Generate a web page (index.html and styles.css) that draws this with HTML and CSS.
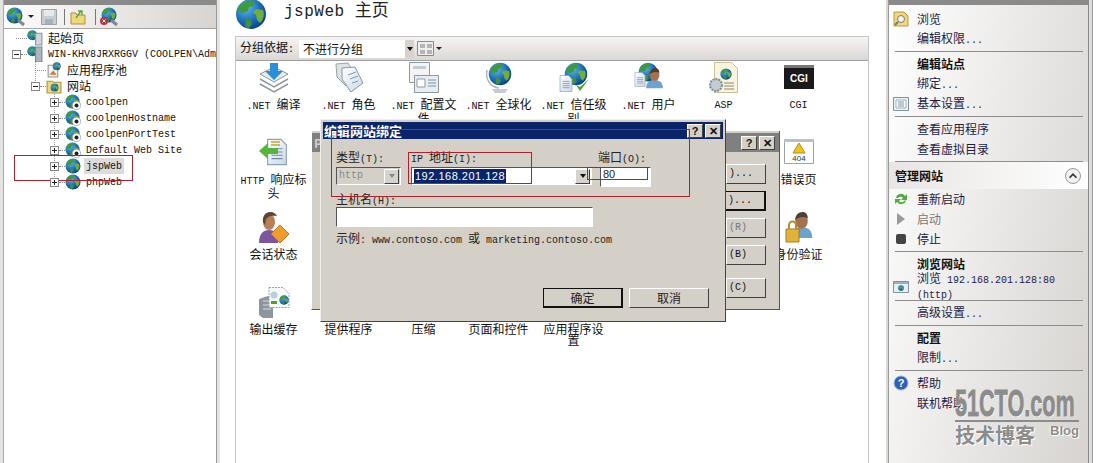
FILE: index.html
```html
<!DOCTYPE html>
<html lang="en">
<head>
  <meta charset="UTF-8" />
  <title>jspWeb 主页</title>
  <link rel="stylesheet" href="styles.css">
</head>
<body>

<svg class="defs" width="0" height="0">
  <defs>
    <radialGradient id="sea" cx="35%" cy="30%" r="80%">
      <stop offset="0" stop-color="#5fb6ea"/>
      <stop offset="0.6" stop-color="#1668b4"/>
      <stop offset="1" stop-color="#0c3a78"/>
    </radialGradient>
    <linearGradient id="paper" x1="0" y1="0" x2="1" y2="1">
      <stop offset="0" stop-color="#ffffff"/>
      <stop offset="1" stop-color="#c9d8e6"/>
    </linearGradient>
    <symbol id="globe" viewBox="0 0 32 32">
      <circle cx="16" cy="16" r="15" fill="url(#sea)"/>
      <path d="M9 4c4-2 8-2 11 0l-2 4-4 1-1 4-5 2-5-2c0-4 2-7 6-9z" fill="#3f9a3c"/>
      <path d="M21 11l7 1c2 5 0 10-3 13l-3-3-1-5-3-3z" fill="#6fae3a"/>
      <path d="M11 20l5 2 1 4-3 4c-2 0-3-1-4-2z" fill="#3f8f3c"/>
    </symbol>
    <symbol id="site" viewBox="0 0 16 16">
      <use href="#globe" width="15" height="15"/>
      <circle cx="11.500" cy="11.500" r="4.200" fill="#fff" stroke="#999" stroke-width=".7"/>
      <circle cx="11.500" cy="11.500" r="2" fill="#222"/>
    </symbol>
    <symbol id="doc" viewBox="0 0 20 24">
      <path d="M1.500.5h12l5 5v18h-17z" fill="url(#paper)" stroke="#8ea2b3"/>
      <path d="M5 9h10M5 12h10M5 15h10M5 18h10" stroke="#6f8aa3"/>
    </symbol>
    <symbol id="person" viewBox="0 0 30 30">
      <path d="M3 29c0-9 5-12 12-12s12 3 12 12z" fill="#6ea3cf"/>
      <ellipse cx="15" cy="10" rx="7" ry="8.500" fill="#a8714d"/>
      <path d="M8 9c0-6 4-9 8-9s6 3 6 7c-4-2-9-2-14 2z" fill="#4b4038"/>
    </symbol>
  </defs>
</svg>

<div class="page">

  <aside class="left">
    <div class="edge"></div>
    <div class="left-tools">
      <svg class="i20" viewBox="0 0 20 20"><use href="#globe" width="17" height="17"/><path d="M12 13l6 5" stroke="#7a8a99" stroke-width="3"/></svg>
      <span class="caret"></span>
      <svg class="i16 save" viewBox="0 0 16 16"><path d="M.5.5h15v15H.5z" fill="#c7cdd2" stroke="#9aa3aa"/><path d="M3 1h10v6H3z" fill="#e6e9eb"/><path d="M4 10h8v5H4z" fill="#aab2b8"/></svg>
      <span class="tool-sep"></span>
      <svg class="i16 open" viewBox="0 0 16 16"><path d="M1 4h5l1 2h8v9H1z" fill="#eed77c" stroke="#a8923f"/><path d="M6 9l5-7M8 2h4v4" stroke="#5aa63a" stroke-width="1.400" fill="none"/></svg>
      <span class="tool-sep wide"></span>
      <svg class="i20" viewBox="0 0 20 20"><use href="#globe" width="16" height="16" x="2"/><circle cx="5" cy="14" r="4" fill="#b8323a"/><path d="M3.500 12.500l3 3m0-3l-3 3" stroke="#fff"/><path d="M12 13l6 5" stroke="#7a8a99" stroke-width="3"/></svg>
    </div>
    <div class="tree">
      <div class="node"><span class="exp none"></span><span class="dots"></span>
        <svg class="i15" viewBox="0 0 15 15"><use href="#globe" width="10" height="10"/><path d="M8 3h6v11H8z" fill="#cfd6dc" stroke="#8a949c"/></svg><span class="cjk">起始页</span></div>
      <div class="node"><span class="exp minus"></span><span class="dots"></span>
        <svg class="i15" viewBox="0 0 15 15"><use href="#globe" width="10" height="10"/><path d="M8 1h6v14H8z" fill="#aeb6bc" stroke="#7b848b"/></svg><span class="host">WIN-KHV8JRXRGGV (COOLPEN\Adm</span></div>
      <div class="node lv1 g1"><span class="exp none"></span><span class="dots"></span>
        <svg class="i15" viewBox="0 0 15 15"><path d="M2 3h9v11H2z" fill="#f2f2f2" stroke="#8a949c"/><use href="#globe" x="6" width="8" height="8"/><path d="M3 12l4-4 3 4z" fill="#d07b2c"/></svg><span class="cjk">应用程序池</span></div>
      <div class="node lv1 g1 half"><span class="exp minus"></span><span class="dots"></span>
        <svg class="i15" viewBox="0 0 15 15"><path d="M1 3h5l1 1h7v10H1z" fill="#eed77c" stroke="#a8923f"/><use href="#globe" x="4" y="5" width="8" height="8"/></svg><span class="cjk">网站</span></div>
      <div class="node lv2 g2"><span class="exp plus"></span><span class="dots"></span><svg class="i15"><use href="#site" width="16" height="16"/></svg><span class="mono">coolpen</span></div>
      <div class="node lv2 g2"><span class="exp plus"></span><span class="dots"></span><svg class="i15"><use href="#site" width="16" height="16"/></svg><span class="mono">coolpenHostname</span></div>
      <div class="node lv2 g2"><span class="exp plus"></span><span class="dots"></span><svg class="i15"><use href="#site" width="16" height="16"/></svg><span class="mono">coolpenPortTest</span></div>
      <div class="node lv2 g2"><span class="exp plus"></span><span class="dots"></span><svg class="i15"><use href="#site" width="16" height="16"/></svg><span class="mono">Default Web Site</span></div>
      <div class="node lv2 g2"><span class="exp plus"></span><span class="dots"></span><svg class="i15"><use href="#globe" width="16" height="16"/></svg><span class="mono picked">jspWeb</span></div>
      <div class="node lv2 g2 half"><span class="exp plus"></span><span class="dots"></span><svg class="i15"><use href="#globe" width="16" height="16"/></svg><span class="mono">phpWeb</span></div>
    </div>
  </aside>

  <main class="center">
    <div class="title">
      <svg class="title-globe"><use href="#globe" width="32" height="32"/></svg>
      <h1><span class="title-en">jspWeb </span>主页</h1>
    </div>
    <div class="panel">
      <div class="group-bar">
        <span class="cjk">分组依据<span class="en">:</span></span>
        <div class="group-select"><span class="cjk">不进行分组</span><span class="drop"></span></div>
        <svg class="view-icon" viewBox="0 0 17 15"><path d="M.5.5h16v14H.5z" fill="#eee" stroke="#8a8a8a"/><path d="M3 3h5v4H3zM10 3h5v4h-5zM3 9h5v4H3zM10 9h5v4h-5z" fill="#b5b5b5"/></svg>
        <span class="caret"></span>
      </div>

      <div class="features">
        <div class="feature">
          <svg class="big" viewBox="0 0 32 32"><path d="M16 20l14-8-14-7L2 12z" fill="#e9edf0" stroke="#8b969e"/><path d="M2 17l14 8 14-8M2 22l14 8 14-8" fill="none" stroke="#8b969e" stroke-width="1.500"/><path d="M12 1h8v8h5l-9 9-9-9h5z" fill="#2a8fd6"/></svg>
          <span class="label"><span class="en">.NET </span>编译</span>
        </div>
        <div class="feature">
          <svg class="big" viewBox="0 0 32 32"><path d="M3 2l12-1 8 12-10 11-9-9z" fill="#dfe3e6" stroke="#9aa4ab"/><path d="M9 6l13-1 8 16-12 9-9-13z" fill="url(#paper)" stroke="#8398a8"/><path d="M15 13l8-3M17 17l8-3M19 21l6-2" stroke="#7f97aa"/></svg>
          <span class="label"><span class="en">.NET </span>角色</span>
        </div>
        <div class="feature">
          <svg class="big" viewBox="0 0 32 32"><path d="M1.500.5h20v20h-20z" fill="#f4f4f4" stroke="#8d9aa5"/><path d="M5 4h13v3H5z" fill="#c3ccd3"/><path d="M6.500 13.500h24v17h-24z" fill="#e7edf2" stroke="#8d9aa5"/><path d="M9 17h8v8H9z" fill="#fff" stroke="#8d9aa5"/><path d="M20 18h8M20 21h8M20 24h8" stroke="#7d92a3"/></svg>
          <span class="label"><span class="en">.NET </span>配置文<br>件</span>
        </div>
        <div class="feature">
          <svg class="big" viewBox="0 0 32 32"><use href="#globe" x="5" width="24" height="24"/><path d="M9 27h16l-3 4H12z" fill="#c5ccd1"/><path d="M4 8c-2 9 3 17 12 18" fill="none" stroke="#aeb6bb" stroke-width="1.500"/></svg>
          <span class="label"><span class="en">.NET </span>全球化</span>
        </div>
        <div class="feature">
          <svg class="big" viewBox="0 0 32 32"><use href="#globe" x="6" width="24" height="24"/><use href="#doc" x="1" y="13" width="14" height="17"/><path d="M18 23l4 6 9-12-9 8z" fill="#4aa52f"/></svg>
          <span class="label"><span class="en">.NET </span>信任级<br>别</span>
        </div>
        <div class="feature">
          <svg class="big" viewBox="0 0 32 32"><use href="#globe" x="5" width="20" height="20"/><use href="#person" x="11" y="3" width="21" height="27"/><use href="#doc" x="1" y="10" width="12" height="15"/></svg>
          <span class="label"><span class="en">.NET </span>用户</span>
        </div>
        <div class="feature">
          <svg class="big" viewBox="0 0 32 32"><path d="M6.500.5h17l6 6v24h-23z" fill="#fbf3dc" stroke="#cdbf97"/><use href="#globe" x="12" y="6" width="12" height="12"/><circle cx="8" cy="23" r="6" fill="#c3ccd3" stroke="#7d8c99" stroke-width="2" stroke-dasharray="2 1"/><path d="M16 21h10M16 24h10M16 27h10" stroke="#8a8a70"/></svg>
          <span class="label en">ASP</span>
        </div>
        <div class="feature">
          <svg class="big" viewBox="0 0 32 32"><path d="M1 3h30v24H1z" fill="#1a1a1a"/><path d="M1 3h30v3H1z" fill="#777"/><text class="cgi-text" x="16" y="20" text-anchor="middle">CGI</text></svg>
          <span class="label en">CGI</span>
        </div>

        <div class="feature">
          <svg class="big" viewBox="0 0 32 32"><use href="#doc" x="8" width="22" height="30"/><path d="M13 5h9M13 8h9" stroke="#c8a53a" stroke-width="1.500"/><path d="M1 14l9-8v5h10v6H10v5z" fill="#57b43d"/></svg>
          <span class="label"><span class="en">HTTP </span>响应标<br>头</span>
        </div>
        <div class="feature"></div><div class="feature"></div><div class="feature"></div>
        <div class="feature"></div><div class="feature"></div><div class="feature"></div>
        <div class="feature">
          <svg class="big" viewBox="0 0 32 32"><path d="M1.500 2.500h29v24h-29z" fill="#fff" stroke="#9aa4ab"/><path d="M1 2h30v3H1z" fill="#b9c0c5"/><path d="M16 6l6 10H10z" fill="#f2c21c" stroke="#b58f10"/><text class="code-text" x="16" y="24" text-anchor="middle">404</text></svg>
          <span class="label">错误页</span>
        </div>

        <div class="feature">
          <svg class="big" viewBox="0 0 32 32"><path d="M1 31c0-9 4-13 10-13s9 3 9 13z" fill="#7b559e"/><ellipse cx="11" cy="10" rx="6" ry="8" fill="#b67f58"/><path d="M5 10c-1-6 3-10 7-10s6 2 7 4c-5-1-9 0-11 3l-1 6z" fill="#5f4430"/><path d="M22 13l9 9-9 9-9-9z" fill="#ef9c2e" stroke="#c87512"/></svg>
          <span class="label">会话状态</span>
        </div>
        <div class="feature"></div><div class="feature"></div><div class="feature"></div>
        <div class="feature"></div><div class="feature"></div><div class="feature"></div>
        <div class="feature">
          <svg class="big" viewBox="0 0 32 32"><use href="#person" x="5" width="27" height="27"/><path d="M3 17h13v13H3z" fill="#e3b23c" stroke="#a67f1d"/><path d="M6 17v-4a3.500 3.500 0 0 1 7 0v4" fill="none" stroke="#b98f2c" stroke-width="2"/></svg>
          <span class="label">身份验证</span>
        </div>

        <div class="feature">
          <svg class="big" viewBox="0 0 32 32"><path d="M1 12l9-3 5 3v19H5l-4-3z" fill="#8d969d"/><path d="M5 14h8M5 18h8M5 22h8" stroke="#d6dbde"/><path d="M11 .5h14l6 6v14H11z" fill="#f6f8f9" stroke="#9aa4ab" stroke-dasharray="2 1"/><circle cx="16" cy="8" r="3.500" fill="#b9cfe0"/><use href="#globe" x="21" y="8" width="10" height="10"/><path d="M13 14h6v3h-6z" fill="#4aa52f"/></svg>
          <span class="label">输出缓存</span>
        </div>
        <div class="feature"><span class="big-gap"></span><span class="label">提供程序</span></div>
        <div class="feature"><span class="big-gap"></span><span class="label">压缩</span></div>
        <div class="feature"><span class="big-gap"></span><span class="label">页面和控件</span></div>
        <div class="feature"><span class="big-gap"></span><span class="label">应用程序设<br>置</span></div>
      </div>
    </div>
  </main>

  <aside class="right">
    <div class="right-edge"></div>
    <div class="act"><span class="act-icon"><svg class="i16" viewBox="0 0 16 16"><path d="M1 1h10l4 4v10H1z" fill="#eed77c" stroke="#b39a45"/><circle cx="8" cy="8" r="3.500" fill="#f5f5f0" stroke="#777"/><path d="M5 11l-3 3" stroke="#777" stroke-width="2"/></svg></span><span>浏览</span></div>
    <div class="act"><span class="act-icon"></span><span>编辑权限<span class="en">...</span></span></div>
    <div class="sep"></div>
    <div class="act strong"><span class="act-icon"></span><span>编辑站点</span></div>
    <div class="act"><span class="act-icon"></span><span>绑定<span class="en">...</span></span></div>
    <div class="act"><span class="act-icon"><svg class="i16" viewBox="0 0 16 16"><path d="M.5 1.500h15v13H.5z" fill="#eef3f6" stroke="#7d92a3"/><path d="M3 4h10v8H3z" fill="#fff" stroke="#9fb0bd"/><path d="M5 6h6M5 8h6M5 10h6" stroke="#7d92a3"/></svg></span><span>基本设置<span class="en">...</span></span></div>
    <div class="sep"></div>
    <div class="act"><span class="act-icon"></span><span>查看应用程序</span></div>
    <div class="act"><span class="act-icon"></span><span>查看虚拟目录</span></div>
    <div class="sep flush"></div>
    <div class="right-head"><span>管理网站</span><span class="collapse"><svg viewBox="0 0 16 16"><path d="M4 10l4-4 4 4" fill="none" stroke="#333" stroke-width="2"/></svg></span></div>
    <div class="act"><span class="act-icon"><svg class="i16" viewBox="0 0 16 16"><path d="M3 7a5 5 0 0 1 9-2l2-2v6H8l2-2a3 3 0 0 0-5 0zM13 9a5 5 0 0 1-9 2l-2 2V8h6l-2 2a3 3 0 0 0 5 0z" fill="#4fae3f"/></svg></span><span>重新启动</span></div>
    <div class="act off"><span class="act-icon"><svg class="i16" viewBox="0 0 16 16"><path d="M4 2l8 6-8 6z" fill="#9a9a9a"/></svg></span><span>启动</span></div>
    <div class="act"><span class="act-icon"><svg class="i16" viewBox="0 0 16 16"><rect x="3" y="3" width="10" height="10" rx="2" fill="#444"/></svg></span><span>停止</span></div>
    <div class="sep"></div>
    <div class="act strong"><span class="act-icon"></span><span>浏览网站</span></div>
    <div class="act browse"><span class="act-icon"><svg class="i16" viewBox="0 0 16 16"><path d="M.5 2.500h15v11H.5z" fill="#e8eef2" stroke="#7d92a3"/><path d="M1 3h14v2H1z" fill="#9fb0bd"/><use href="#globe" x="5" y="6" width="6" height="6"/></svg></span><span class="browse-text">浏览<span class="en"> 192.168.201.128:80</span><br><span class="en">(http)</span></span></div>
    <div class="sep"></div>
    <div class="act"><span class="act-icon"></span><span>高级设置<span class="en">...</span></span></div>
    <div class="sep"></div>
    <div class="act strong"><span class="act-icon"></span><span>配置</span></div>
    <div class="act"><span class="act-icon"></span><span>限制<span class="en">...</span></span></div>
    <div class="sep"></div>
    <div class="act"><span class="act-icon"><svg class="i16" viewBox="0 0 16 16"><circle cx="8" cy="8" r="7" fill="#2f5fb3" stroke="#9fb2d8"/><text class="help-text" x="8" y="12" text-anchor="middle">?</text></svg></span><span>帮助</span></div>
    <div class="act"><span class="act-icon"></span><span>联机帮助</span></div>
  </aside>
</div>

<!-- dialog behind, only its edge shows -->
<div class="back-dialog">
  <div class="back-title"><span class="back-title-text">P</span><span class="cap-btn">?</span><span class="cap-btn">✕</span></div>
  <div class="back-buttons">
    <span class="btn-mini">)...</span>
    <span class="btn-mini def">)...</span>
    <span class="btn-mini off">(R)</span>
    <span class="btn-mini">(B)</span>
    <span class="btn-mini low">(C)</span>
  </div>
</div>

<div class="dialog">
  <div class="dialog-title"><span>编辑网站绑定</span><span class="cap-btn">?</span><span class="cap-btn">✕</span></div>
  <div class="dialog-body">
    <div class="binding-row">
      <div class="col-type">
        <label>类型<span class="en">(T):</span></label>
        <div class="field disabled"><span class="en">http</span><span class="drop"></span></div>
      </div>
      <div class="col-ip">
        <label><span class="en">IP </span>地址<span class="en">(I):</span></label>
        <div class="field"><span class="ip-value">192.168.201.128</span><span class="drop"></span></div>
      </div>
      <div class="col-port">
        <label>端口<span class="en">(O):</span></label>
        <div class="field tall"><span class="port-value">80</span></div>
      </div>
    </div>
    <label class="host-label">主机名<span class="en">(H):</span></label>
    <div class="field host-input"></div>
    <div class="example">示例<span class="en">: www.contoso.com </span>或<span class="en"> marketing.contoso.com</span></div>
    <div class="dialog-buttons">
      <button class="btn def">确定</button>
      <button class="btn">取消</button>
    </div>
  </div>
</div>

<!-- red marks drawn on the screenshot -->
<div class="mark mark-site"></div>
<div class="mark mark-all"></div>
<div class="mark mark-ip"></div>
<div class="mark mark-port"></div>

<div class="watermark">
  <div class="wm-logo">51CTO.com</div>
  <div class="wm-line"></div>
  <div class="wm-sub"><span class="wm-blog-cn">技术博客</span><span class="wm-blog">Blog</span></div>
</div>

</body>
</html>
```

FILE: styles.css
```css
* {
  box-sizing: border-box;
}

html, body {
  margin: 0;
  height: 463px;
  overflow: hidden;
}

body {
  background: #fff;
  color: #111;
  font-family: "Noto Sans CJK SC", "Liberation Mono", monospace;
  font-size: 12px;
  line-height: 14px;
}

.defs {
  position: absolute;
}

.en, .mono, .host {
  font-family: "Liberation Mono", "Noto Sans CJK SC", monospace;
  font-size: 10px;
  white-space: pre;
}

svg {
  display: block;
  flex: none;
}

.i20 { width: 20px; height: 20px; }
.i16 { width: 16px; height: 16px; }
.i15 { width: 16px; height: 16px; }

.page {
  display: flex;
  height: 463px;
}

/* left tree */
.left {
  width: 214px;
  flex: none;
  margin: 0 3px;
  border-left: 1px solid #aaa;
  border-right: 1px solid #999;
  box-shadow: 3px 0 0 #e6e4e2, -3px 0 0 #e6e4e2;
}

.edge {
  height: 5px;
  background: #8a8a8a;
}

.left-tools {
  height: 24px;
  display: flex;
  align-items: center;
  padding-left: 2px;
  background: linear-gradient(90deg, #fdfcfc, #d8d4d1);
  border-bottom: 1px solid #a5a5a5;
}

.caret {
  width: 0;
  height: 0;
  margin-left: 2px;
  border: 3px solid transparent;
  border-top: 3px solid #222;
  border-bottom: 0;
}

.save {
  margin-left: 7px;
}

.tool-sep {
  width: 1px;
  height: 16px;
  background: #777;
  margin: 0 5px 0 7px;
}

.tool-sep.wide {
  margin: 0 3px 0 9px;
}

.tree {
  padding-top: 1px;
}

.node {
  height: 16px;
  display: flex;
  align-items: center;
  padding-left: 8px;
  white-space: nowrap;
  overflow: hidden;
}

.node.lv1 { padding-left: 27px; }
.node.lv2 { padding-left: 46px; }

.node.g1 {
  background: repeating-linear-gradient(#999 0 1px, transparent 1px 2px) 31px 0 / 1px 100% no-repeat;
}

.node.g2 {
  background: repeating-linear-gradient(#999 0 1px, transparent 1px 2px) 50px 0 / 1px 100% no-repeat;
}

.node.half {
  background-size: 1px 50%;
}

.exp {
  width: 9px;
  height: 9px;
  flex: none;
  position: relative;
  z-index: 1;
  background: #fff;
  border: 1px solid #888;
}

.exp.none {
  background: none;
  border: 0;
}

.exp.minus::before, .exp.plus::before {
  content: "";
  position: absolute;
  left: 1px;
  right: 1px;
  top: 3px;
  height: 1px;
  background: #222;
}

.exp.plus::after {
  content: "";
  position: absolute;
  top: 1px;
  bottom: 1px;
  left: 3px;
  width: 1px;
  background: #222;
}

.dots {
  width: 6px;
  border-top: 1px dotted #888;
}

.exp.none + .dots {
  width: 11px;
  margin-left: -5px;
}

.node .i15 {
  margin-right: 5px;
}

.node .mono, .node .host {
  padding-top: 2px;
}

.node .mono.picked {
  background: #dcdcdc;
  padding: 3px 2px 1px 2px;
  margin-left: -2px;
}

/* middle part */
.center {
  width: 634px;
  margin-left: 15px;
  flex: none;
}

.title {
  height: 36px;
  display: flex;
  align-items: flex-start;
}

.title-globe {
  width: 32px;
  height: 32px;
  margin-top: -2px;
}

.title h1 {
  margin: 0 0 0 17px;
  font-size: 17px;
  font-weight: normal;
  line-height: 18px;
  color: #222;
  white-space: nowrap;
}

.title-en {
  font-family: "Liberation Mono", monospace;
  font-size: 16px;
  letter-spacing: 0.5px;
  white-space: pre;
}

.panel {
  height: 427px;
  border: 1px solid #c4c4c4;
  border-bottom: 0;
}

.group-bar {
  height: 24px;
  display: flex;
  align-items: center;
  padding-left: 4px;
  background: linear-gradient(#f6f4f3, #dbd7d4);
  border-bottom: 1px solid #9e9e9e;
}

.group-select {
  width: 115px;
  height: 18px;
  margin-left: 5px;
  padding-left: 4px;
  display: flex;
  align-items: center;
  justify-content: space-between;
  background: #fff;
}

.group-select .drop {
  width: 9px;
  height: 18px;
}

.drop {
  display: block;
  flex: none;
  position: relative;
  background: #d6d3ce;
}

.drop::after {
  content: "";
  position: absolute;
  left: 50%;
  top: 50%;
  margin: -2px 0 0 -3px;
  border: 3px solid transparent;
  border-top: 4px solid #111;
  border-bottom: 0;
}

.view-icon {
  width: 17px;
  height: 15px;
  margin-left: 3px;
}

.features {
  display: grid;
  grid-template-columns: repeat(8, 75px);
  grid-auto-rows: 75px;
  padding-top: 1px;
}

.feature {
  display: flex;
  flex-direction: column;
  align-items: center;
  text-align: center;
}

.big, .big-gap {
  display: block;
  width: 32px;
  height: 32px;
  margin-bottom: 3px;
}

.label {
  line-height: 11px;
  padding-top: 1px;
}

.label.en {
  padding-top: 3px;
}

.cgi-text {
  font-family: "Liberation Sans", sans-serif;
  font-size: 10px;
  font-weight: bold;
  fill: #fff;
}

.code-text {
  font-family: "Liberation Sans", sans-serif;
  font-size: 8px;
  fill: #333;
}

.help-text {
  font-family: "Liberation Sans", sans-serif;
  font-size: 11px;
  font-weight: bold;
  fill: #fff;
}

/* action pane */
.right {
  width: 201px;
  margin-left: 19px;
  flex: none;
  border-left: 1px solid #999;
  border-right: 1px solid #888;
  background: linear-gradient(100deg, #fff 0%, #d6d3d0 100%);
  color: #1c1c44;
  box-shadow: -2px 0 0 #dad7d4, 3px 0 0 #e0dedc, 4px 0 0 #999;
}

.right-edge {
  height: 5px;
  margin-bottom: 4px;
  background: #8a8a8a;
}

.act {
  height: 20px;
  display: flex;
  align-items: center;
  padding-left: 4px;
}

.act.strong {
  font-weight: bold;
  color: #111;
}

.act.off {
  color: #777;
}

.act-icon {
  width: 16px;
  height: 16px;
  margin-right: 8px;
  flex: none;
}

.act.browse {
  height: 23px;
  margin-top: 1px;
}

.browse-text {
  line-height: 12px;
  white-space: nowrap;
}

.sep {
  height: 1px;
  margin: 2px 5px 2px 6px;
  background: #8d8d8d;
}

.sep.flush {
  margin-bottom: 0;
}

.right-head {
  height: 27px;
  padding: 0 7px 0 6px;
  display: flex;
  align-items: center;
  justify-content: space-between;
  font-weight: bold;
  color: #111;
  background: linear-gradient(90deg, #e8e6e4, #fff);
}

.collapse {
  width: 16px;
  height: 16px;
  border-radius: 50%;
  border: 1px solid #999;
  background: #f1f1f1;
}

/* dialogs */
.back-dialog {
  position: absolute;
  left: 311px;
  top: 131px;
  width: 469px;
  height: 179px;
  background: #d4d0c8;
  border-right: 1px solid #555;
  border-bottom: 1px solid #555;
  border-left: 1px solid #fff;
}

.back-title {
  height: 19px;
  margin-top: 2px;
  display: flex;
  align-items: center;
  gap: 2px;
  justify-content: flex-end;
  padding-right: 4px;
  background: #808080;
  color: #d4d0c8;
  font-weight: bold;
}

.back-title-text {
  margin-right: auto;
  padding-left: 2px;
}

.back-buttons {
  display: flex;
  flex-direction: column;
  align-items: flex-end;
  gap: 7px;
  padding: 12px 13px 0 0;
}

.btn-mini {
  width: 40px;
  height: 20px;
  padding-left: 2px;
  background: #d4d0c8;
  font-family: "Liberation Mono", monospace;
  font-size: 10px;
  line-height: 18px;
  border: 1px solid;
  border-color: #fff #404040 #404040 #fff;
}

.btn-mini.def {
  border: 2px solid #111;
  border-left: 0;
  border-top-width: 1px;
}

.btn-mini.off {
  color: #777;
}

.btn-mini.low {
  margin-top: 6px;
}

.dialog {
  position: absolute;
  left: 320px;
  top: 119px;
  width: 406px;
  height: 203px;
  background: #d4d0c8;
  padding: 2px 2px 0;
  border: 1px solid;
  border-color: #f2f0ec #444 #444 #f2f0ec;
}

.dialog-title {
  height: 17px;
  display: flex;
  align-items: center;
  justify-content: flex-end;
  gap: 2px;
  padding-right: 2px;
  background: #0a246a;
  color: #fff;
  font-weight: bold;
  font-size: 13px;
}

.dialog-title span:first-child {
  margin-right: auto;
  margin-left: 1px;
}

.cap-btn {
  width: 16px;
  height: 14px;
  background: #d4d0c8;
  color: #111;
  text-align: center;
  font-family: "Liberation Sans", sans-serif;
  font-size: 11px;
  font-weight: bold;
  line-height: 13px;
  border: 1px solid;
  border-color: #fff #404040 #404040 #fff;
}

.dialog-body {
  padding: 11px 14px 0 13px;
  color: #222;
}

.binding-row {
  display: grid;
  grid-template-columns: 65px 181px 49px;
  column-gap: 10px;
}

.col-port {
  margin-left: -2px;
}

label {
  display: block;
  height: 13px;
  line-height: 13px;
  margin-bottom: 4px;
}

.col-port label {
  margin-left: -2px;
}

.field {
  height: 18px;
  display: flex;
  align-items: center;
  justify-content: space-between;
  background: #fff;
  padding: 0 1px 0 2px;
  border: 1px solid;
  border-color: #555 #fff #fff #555;
}

.field .drop {
  width: 15px;
  height: 15px;
  border: 1px solid;
  border-color: #fff #404040 #404040 #fff;
}

.field.disabled {
  background: #d4d0c8;
  color: #888;
}

.field.disabled .drop::after {
  border-top-color: #888;
}

.field.tall {
  width: 51px;
  height: 20px;
  align-items: flex-start;
}

.ip-value {
  background: #0a246a;
  color: #fff;
  font-family: "Liberation Sans", sans-serif;
  font-size: 11px;
  letter-spacing: 0.5px;
  line-height: 14px;
  padding: 0 1px;
}

.port-value {
  font-family: "Liberation Sans", sans-serif;
  font-size: 11px;
  line-height: 13px;
}

.host-label {
  margin-top: 5px;
  margin-bottom: 2px;
}

.host-input {
  width: 257px;
  height: 20px;
}

.example {
  margin-top: 4px;
  height: 14px;
}

.dialog-buttons {
  display: flex;
  justify-content: flex-end;
  gap: 6px;
  margin-top: 43px;
}

.btn {
  width: 80px;
  height: 20px;
  padding: 0;
  background: #d4d0c8;
  color: #222;
  font-family: inherit;
  font-size: 12px;
  line-height: 16px;
  border: 1px solid;
  border-color: #fff #404040 #404040 #fff;
}

.btn.def {
  border: 2px solid #111;
  border-top-width: 1px;
  border-left-width: 1px;
}

/* annotations */
.mark {
  position: absolute;
  border: 1px solid #b3202a;
}

.mark-site { left: 14px; top: 155px; width: 119px; height: 26px; }
.mark-all { left: 331px; top: 129px; width: 359px; height: 68px; }
.mark-ip { left: 408px; top: 152px; width: 124px; height: 32px; }
.mark-port { left: 587px; top: 167px; width: 61px; height: 13px; }

.watermark {
  position: absolute;
  left: 955px;
  top: 388px;
  width: 124px;
  color: #8c8c8c;
  text-shadow: 1px 1px 0 #fff, -1px 0 0 #fff;
}

.wm-logo {
  font-family: "Liberation Sans", sans-serif;
  font-size: 36px;
  font-weight: bold;
  line-height: 32px;
  white-space: nowrap;
  -webkit-text-stroke: 1px #8c8c8c;
  transform: scaleX(0.6);
  transform-origin: 0 0;
}

.wm-line {
  height: 2px;
  background: #8c8c8c;
}

.wm-sub {
  display: flex;
  justify-content: space-between;
  align-items: flex-start;
  margin-top: 1px;
}

.wm-blog-cn {
  font-size: 20px;
  font-weight: bold;
  line-height: 24px;
}

.wm-blog {
  font-family: "Liberation Sans", sans-serif;
  font-size: 13px;
  font-weight: bold;
  line-height: 16px;
}
```
